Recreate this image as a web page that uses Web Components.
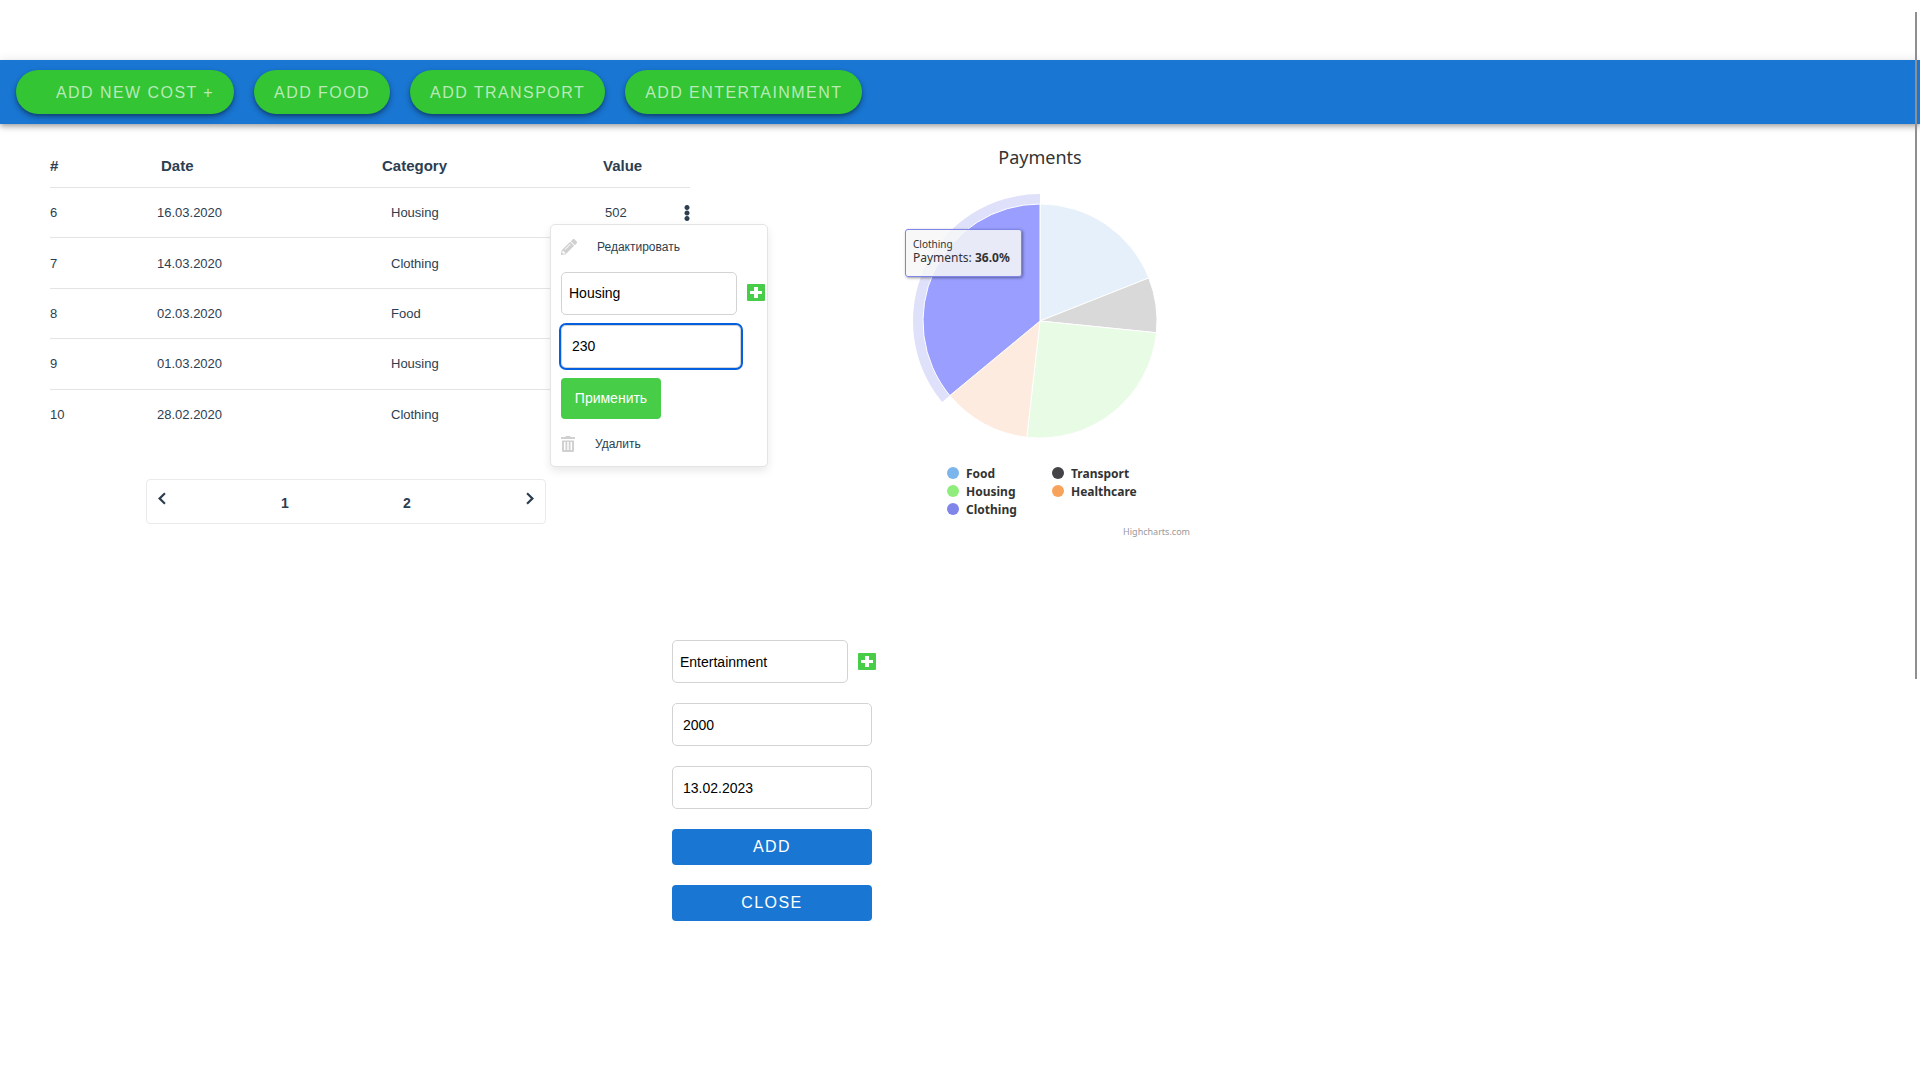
<!DOCTYPE html>
<html lang="en">
<head>
<meta charset="utf-8">
<title>Payments</title>
<style>
  body { margin: 0; background: #fff; color: #2c3e50; font-family: Arial, "Liberation Sans", sans-serif; font-size: 13px; }
</style>
</head>
<body>
<cost-app></cost-app>
<script>
const define = (name, html, setup) => {
  const template = document.createElement('template');
  template.innerHTML = `<style>*{box-sizing:border-box}button,input,select{font-family:inherit;margin:0}</style>` + html;
  customElements.define(name, class extends HTMLElement {
    constructor() {
      super();
      this.attachShadow({ mode: 'open' }).append(template.content.cloneNode(true));
    }
    connectedCallback() { if (setup) setup(this, this.shadowRoot); }
  });
};

define('pill-button', `
<style>
  :host { display: block; }
  button { height: 44px; padding: 1px 20px 0; border: 0; border-radius: 22px; background: #33c533; color: rgba(255,255,255,.66);
    font-size: 16px; line-height: 20px; letter-spacing: .09em; text-transform: uppercase; white-space: nowrap;
    box-shadow: 0 3px 6px rgba(0,0,0,.3), 0 2px 3px rgba(0,0,0,.2); }
  :host([lead]) button { padding-left: 40px; }
</style>
<button type="button"><slot></slot></button>`);

define('top-bar', `
<style>
  :host { display: flex; align-items: center; gap: 20px; height: 64px; margin-top: 60px; padding: 0 16px; background: #1976d2;
    box-shadow: 0 2px 4px -1px rgba(0,0,0,.2), 0 4px 5px rgba(0,0,0,.14), 0 1px 10px rgba(0,0,0,.12); }
</style>
<slot></slot>`);

define('app-icon', `
<style>
  :host { display: block; flex: none; }
  svg { display: block; fill: currentColor; }
</style>
<div></div>`, (host, root) => {
  const icons = {
    pencil: [16, 16, '0 0 512 512', 'M497.9 142.1l-46.1 46.1c-4.7 4.7-12.3 4.7-17 0l-111-111c-4.7-4.7-4.7-12.3 0-17l46.1-46.1c18.7-18.7 49.1-18.7 67.9 0l60.1 60.1c18.8 18.7 18.8 49.1 0 67.9zM284.2 99.8L21.6 362.4.4 483.9c-2.9 16.4 11.4 30.6 27.8 27.8l121.5-21.3 262.6-262.6c4.7-4.7 4.7-12.3 0-17l-111-111c-4.8-4.7-12.4-4.7-17.1 0zM124.1 339.9c-5.5-5.5-5.5-14.3 0-19.8l154-154c5.5-5.5 14.3-5.5 19.8 0s5.5 14.3 0 19.8l-154 154c-5.5 5.5-14.3 5.5-19.8 0zM88 424h48v36.3l-64.5 11.3-31.1-31.1L51.7 376H88v48z'],
    trash: [14, 16, '0 0 14 16', 'M4.5 0H9.5V1H14V3H0V1H4.5ZM1 4.5H13V15Q13 16 12 16H2Q1 16 1 15ZM3 6V14H4.5V6ZM6.25 6V14H7.75V6ZM9.5 6V14H11V6Z'],
    plus: [18, 18, '0 0 18 18', 'M1 0H17Q18 0 18 1V16Q18 17 17 17H1Q0 17 0 16V1Q0 0 1 0ZM7 3V7H3V10H7V14H11V10H15V7H11V3Z'],
    dots: [6, 18, '0 0 6 18', 'M3 1a2.5 2.5 0 1 0 .01 0ZM3 6.5a2.5 2.5 0 1 0 .01 0ZM3 12a2.5 2.5 0 1 0 .01 0Z'],
    left: [8, 13, '0 0 8 13', 'M7.7 2L3.2 6.5L7.7 11L6.2 12.6L0 6.5L6.2.4Z'],
    right: [8, 13, '0 0 8 13', 'M.3 2L4.8 6.5L.3 11L1.8 12.6L8 6.5L1.8.4Z']
  };
  const [w, h, box, d] = icons[host.getAttribute('name')];
  root.querySelector('div').innerHTML = `<svg width="${w}" height="${h}" viewBox="${box}" aria-hidden="true"><path fill-rule="evenodd" d="${d}"/></svg>`;
});

define('category-picker', `
<style>
  :host { display: flex; align-items: center; gap: 10px; }
  select { appearance: none; width: 176px; height: 43px; padding: 0 7px; border: 1px solid #d3d3d3; border-radius: 5px;
    background: #fff; color: #000; font-size: 14px; }
  button { padding: 0; border: 0; background: none; color: #48cd48; }
</style>
<select aria-label="Category"><option>Food</option><option>Transport</option><option>Housing</option><option>Healthcare</option><option>Clothing</option><option>Entertainment</option></select>
<button type="button" aria-label="New category"><app-icon name="plus"></app-icon></button>`, (host, root) => {
  root.querySelector('select').value = host.getAttribute('value');
});

define('text-field', `
<style>
  :host { display: block; width: 200px; }
  input { display: block; width: 100%; height: 43px; padding: 0 10px; border: 1px solid #d3d3d3; border-radius: 5px;
    background: #fff; color: #000; font-size: 14px; }
  :host([active]) input { outline: 2px solid #0560df; }
</style>
<input type="text">`, (host, root) => {
  const input = root.querySelector('input');
  input.value = host.getAttribute('value');
  input.setAttribute('aria-label', host.getAttribute('label'));
});

define('row-menu', `
<style>
  :host { display: flex; flex-direction: column; align-items: flex-start; width: 218px; padding: 14px 10px; border: 1px solid #e2e4e6;
    border-radius: 5px; background: #fff; box-shadow: 0 4px 10px rgba(0,0,0,.09); }
  .item { display: flex; align-items: center; gap: 20px; height: 16px; padding: 0; border: 0; background: none; color: #2c3e50; font-size: 12px; line-height: 16px; }
  .item app-icon { color: #d0d0d0; }
  category-picker { margin: 17px 0 10px; }
  text-field { width: 180px; }
  .apply { width: 100px; height: 41px; margin: 10px 0 17px; padding: 0; border: 0; border-radius: 4px; background: #48cd48; color: #fff; font-size: 14px; }
</style>
<button class="item" type="button"><app-icon name="pencil"></app-icon>Редактировать</button>
<category-picker value="Housing"></category-picker>
<text-field active label="Value" value="230"></text-field>
<button class="apply" type="button">Применить</button>
<button class="item" type="button"><app-icon name="trash"></app-icon>Удалить</button>`);

define('cost-table', `
<style>
  :host { display: block; }
  table { width: 100%; height: 296px; table-layout: fixed; border-collapse: separate; border-spacing: 0; }
  th, td { padding: 0; text-align: left; vertical-align: middle; font-size: 13px; }
  thead tr { height: 44px; }
  tbody tr { height: 50px; }
  th { font-size: 15px; }
  tr:not(:last-child) td, th { border-bottom: 1px solid #e2e4e6; }
  .id { width: 107px; } .date { width: 225px; } .cat { width: 221px; }
  th.date { padding-left: 4px; }
  td:nth-child(3) { padding-left: 9px; }
  td:nth-child(4) { padding-left: 2px; }
  .value { display: flex; align-items: center; justify-content: space-between; }
  .more { position: relative; }
  .more > button { display: block; padding: 0; border: 0; background: none; color: #2c3e50; }
  row-menu { position: absolute; z-index: 2; top: 20px; right: -78px; }
</style>
<table>
  <thead><tr><th class="id">#</th><th class="date">Date</th><th class="cat">Category</th><th>Value</th></tr></thead>
  <tbody></tbody>
</table>`, (host, root) => {
  const rows = [[6, '16.03.2020', 'Housing', '502'], [7, '14.03.2020', 'Clothing', ''], [8, '02.03.2020', 'Food', ''],
    [9, '01.03.2020', 'Housing', ''], [10, '28.02.2020', 'Clothing', '']];
  root.querySelector('tbody').innerHTML = rows.map(([id, date, cat, value]) =>
    `<tr><td>${id}</td><td>${date}</td><td>${cat}</td><td>${value && `<div class="value"><span>${value}</span>
      <div class="more"><button type="button" aria-label="Row menu"><app-icon name="dots"></app-icon></button><row-menu></row-menu></div></div>`}</td></tr>`).join('');
});

define('page-switch', `
<style>
  :host { display: grid; grid-template-columns: 66px 122px 122px 66px; justify-content: space-between; align-items: center; width: 400px; height: 45px; padding: 0 11px;
    border: 1px solid #e8eaeb; border-radius: 4px; }
  button { padding: 0; border: 0; background: none; color: #2c3e50; font-size: 14px; font-weight: bold; line-height: 18px; text-align: center; }
  .arrow { padding-bottom: 6px; }
  .arrow:first-child { justify-self: start; }
  .arrow:last-child { justify-self: end; }
  .num { padding-top: 3px; }
</style>
<button class="arrow" type="button" aria-label="Previous page"><app-icon name="left"></app-icon></button>
<button class="num" type="button">1</button>
<button class="num" type="button">2</button>
<button class="arrow" type="button" aria-label="Next page"><app-icon name="right"></app-icon></button>`);

define('pie-chart', `
<style>
  :host { display: block; position: relative; width: 320px; color: #333; font-family: "Noto Sans", sans-serif; font-size: 12px; }
  h2 { margin: 0; font-size: 18px; line-height: 26px; font-weight: 400; text-align: center; }
  svg { display: block; width: 320px; height: 268px; margin-top: 18px; }
  ul { display: grid; grid-template-columns: 105px auto; justify-content: start; margin: 8px 0 0; padding: 0 0 0 67px; list-style: none; }
  li { display: flex; align-items: center; gap: 7px; height: 18px; font-weight: 700; }
  i { width: 12px; height: 12px; border-radius: 50%; }
  a { display: block; margin: 8px 10px 0 0; color: #999; font-size: 9px; line-height: 12px; text-align: right; text-decoration: none; }
  .tip { position: absolute; top: 85px; left: 25px; width: 117px; height: 48px; padding: 7px 0 0 7px; border: 1px solid #8085e9;
    border-radius: 3px; background: rgba(247,247,247,.85); box-shadow: 1px 1px 3px rgba(0,0,0,.4); line-height: 14px; white-space: nowrap; }
  .tip small { display: block; font-size: 10px; line-height: 14px; }
</style>
<h2>Payments</h2>
<svg viewBox="0 0 320 268" role="img" aria-label="Payments by category"></svg>
<ul></ul>
<a href="#">Highcharts.com</a>
<div class="tip"><small>Clothing</small>Payments: <b>36.0%</b></div>`, (host, root) => {
  const slices = [['Food', 19, '#e5f0fb', '#7cb5ec'], ['Transport', 7.6, '#d9d9d9', '#434348'], ['Housing', 25.2, '#e8fbe5', '#90ed7d'],
    ['Healthcare', 12.2, '#feebdf', '#f7a35c'], ['Clothing', 36, '#999eff', '#8085e9']];
  const cx = 160, cy = 133, r = 117;
  const at = (share, radius) => {
    const a = share / 100 * 2 * Math.PI;
    return `${(cx + radius * Math.sin(a)).toFixed(2)} ${(cy - radius * Math.cos(a)).toFixed(2)}`;
  };
  let sum = 0;
  const paths = slices.map(([, share, fill]) => {
    const from = sum;
    sum = Math.min(100, sum + share);
    return `<path fill="${fill}" stroke="#fff" stroke-linejoin="round" d="M${cx} ${cy}L${at(from, r)}A${r} ${r} 0 0 1 ${at(sum, r)}Z"/>`;
  });
  const halo = `<path fill="#dfe0fa" d="M${at(64, 127)}A127 127 0 0 1 ${at(100, 127)}L${at(100, r)}A${r} ${r} 0 0 0 ${at(64, r)}Z"/>`;
  root.querySelector('svg').innerHTML = halo + paths.join('');
  root.querySelector('ul').innerHTML = slices.map(([name, , , dot]) => `<li><i style="background:${dot}"></i>${name}</li>`).join('');
});

define('cost-form', `
<style>
  :host { display: flex; flex-direction: column; gap: 20px; width: 210px; }
  button { width: 200px; height: 36px; padding: 0; border: 0; border-radius: 4px; background: #1976d2; color: #fff;
    font-size: 16px; letter-spacing: .09em; text-transform: uppercase; }
</style>
<category-picker value="Entertainment"></category-picker>
<text-field label="Value" value="2000"></text-field>
<text-field label="Date" value="13.02.2023"></text-field>
<button type="button">Add</button>
<button type="button">Close</button>`);

define('scroll-mark', `
<style>
  :host { position: fixed; z-index: 3; top: 12px; right: 3px; bottom: 401px; width: 2px; background: #8f8f8f; }
</style>`);

define('cost-app', `
<style>
  :host { display: flow-root; }
  main { display: flex; flex-direction: column; gap: 102px; }
  .board { display: flex; align-items: flex-start; gap: 190px; padding: 20px 50px 0; }
  .list { display: flex; flex-direction: column; align-items: center; gap: 39px; width: 640px; }
  cost-table { width: 100%; }
  .list page-switch { margin-right: 48px; }
  cost-form { margin-left: 35%; }
</style>
<top-bar>
  <pill-button lead>Add new cost +</pill-button>
  <pill-button>Add food</pill-button>
  <pill-button>Add transport</pill-button>
  <pill-button>Add entertainment</pill-button>
</top-bar>
<main>
  <section class="board">
    <div class="list"><cost-table></cost-table><page-switch></page-switch></div>
    <pie-chart></pie-chart>
  </section>
  <cost-form></cost-form>
</main>
<scroll-mark></scroll-mark>`);
</script>
</body>
</html>
